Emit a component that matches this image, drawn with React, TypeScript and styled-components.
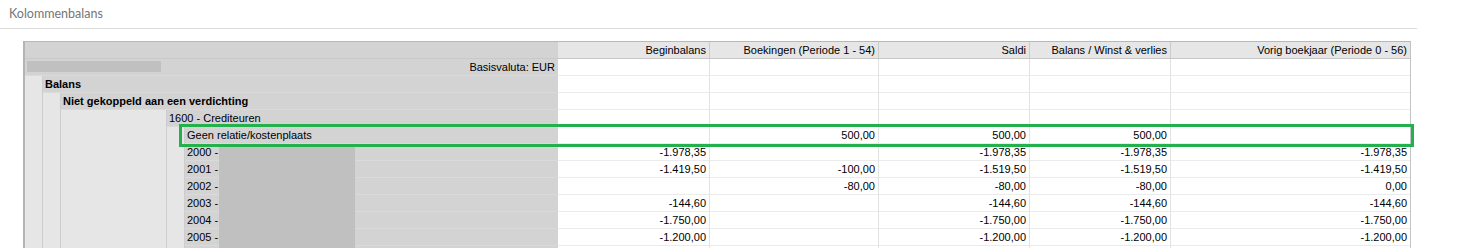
import styled, { createGlobalStyle } from "styled-components";

const GlobalStyle = createGlobalStyle`
    body {
        margin: 0;
        background: #ffffff;
        font-family: "Liberation Sans", Arial, sans-serif;
    }
`

const TitleBar = styled.div`
    width: 1408px;
    height: 28px;
    padding-left: 9px;
    border-bottom: 1px solid #dcdcdc;
    font-family: Lato, "Open Sans", sans-serif;
    font-size: 12.5px;
    line-height: 27px;
    color: #767676;
`

const TableWrap = styled.div`
    position: relative;
    width: 1385px;
    margin: 12px 0 0 23px;
    border-top: 1px solid #b8b8b8;
    border-left: 2px solid #b4b4b4;
    border-right: 1px solid #c4c4c4;
    font-size: 11px;
    line-height: 16px;
    color: #000000;
`

const Row = styled.div`
    display: grid;
    grid-template-columns: 533px 152px 169px 151px 141px 239px;
    height: 17px;
`

const LabelCell = styled.div`
    display: flex;
    height: 17px;
    background: #d3d3d3;
`

const Indent = styled.div<{ $w: number }>`
    flex: none;
    width: ${p => p.$w}px;
    height: 17px;
    box-sizing: border-box;
    background: #e6e6e6;
    border-right: 1px solid #cdcdcd;
`

const LabelBody = styled.div<{ $bold?: boolean; $right?: boolean }>`
    flex: 1;
    display: flex;
    justify-content: ${p => (p.$right ? "space-between" : "flex-start")};
    height: 16px;
    padding: 0 3px 0 2px;
    border-bottom: 1px solid #dadada;
    font-weight: ${p => (p.$bold ? 700 : 400)};
    white-space: nowrap;
`

const Code = styled.span`
    flex: none;
    width: 32px;
`

const Redacted = styled.span<{ $w: number; $inset?: boolean }>`
    flex: none;
    width: ${p => p.$w}px;
    height: ${p => (p.$inset ? "11px" : "17px")};
    margin-top: ${p => (p.$inset ? "2px" : "0")};
    background: #c0c0c0;
`

const HeadCell = styled.div`
    height: 16px;
    padding-right: 3px;
    background: #e6e6e6;
    border-right: 1px solid #cbcbcb;
    border-bottom: 1px solid #c6c6c6;
    text-align: right;
    white-space: nowrap;
    &:last-child {
        border-right: none;
    }
`

const HeadLabel = styled.div`
    height: 16px;
    background: #d3d3d3;
    border-bottom: 1px solid #c9c9c9;
`

const NumCell = styled.div`
    height: 16px;
    padding-right: 3px;
    background: #ffffff;
    border-right: 1px solid #e2e2e2;
    border-bottom: 1px solid #ebebeb;
    text-align: right;
    white-space: nowrap;
    &:last-child {
        border-right: none;
    }
`

const Highlight = styled.div`
    position: absolute;
    left: 154px;
    top: 82px;
    width: 1235px;
    height: 23px;
    box-sizing: border-box;
    border: 3px solid #22b14c;
    pointer-events: none;
`

type Values = [string, string, string, string, string]

const columns = [
    "Beginbalans",
    "Boekingen (Periode 1 - 54)",
    "Saldi",
    "Balans / Winst & verlies",
    "Vorig boekjaar (Periode 0 - 56)",
]

const empty: Values = ["", "", "", "", ""]

// the last row only peeks in at the bottom edge, so it stays blank
const accounts: { code: string; values: Values }[] = [
    { code: "2000 -", values: ["-1.978,35", "", "-1.978,35", "-1.978,35", "-1.978,35"] },
    { code: "2001 -", values: ["-1.419,50", "-100,00", "-1.519,50", "-1.519,50", "-1.419,50"] },
    { code: "2002 -", values: ["", "-80,00", "-80,00", "-80,00", "0,00"] },
    { code: "2003 -", values: ["-144,60", "", "-144,60", "-144,60", "-144,60"] },
    { code: "2004 -", values: ["-1.750,00", "", "-1.750,00", "-1.750,00", "-1.750,00"] },
    { code: "2005 -", values: ["-1.200,00", "", "-1.200,00", "-1.200,00", "-1.200,00"] },
    { code: "", values: empty },
]

function Numbers({ values }: { values: Values }) {
    return (
        <>
            {values.map((v, i) => (
                <NumCell key={i}>{v}</NumCell>
            ))}
        </>
    )
}

function Indents({ widths }: { widths: number[] }) {
    return (
        <>
            {widths.map((w, i) => (
                <Indent key={i} $w={w} />
            ))}
        </>
    )
}

function App() {
    const deep = [18, 18, 106, 18]

    return (
        <>
            <GlobalStyle />
            <TitleBar>Kolommenbalans</TitleBar>

            <TableWrap>
                <Row>
                    <HeadLabel />
                    {columns.map(c => (
                        <HeadCell key={c}>{c}</HeadCell>
                    ))}
                </Row>

                <Row>
                    <LabelCell>
                        <LabelBody $right>
                            <Redacted $w={134} $inset />
                            <span>Basisvaluta: EUR</span>
                        </LabelBody>
                    </LabelCell>
                    <Numbers values={empty} />
                </Row>

                <Row>
                    <LabelCell>
                        <Indents widths={[18]} />
                        <LabelBody $bold>Balans</LabelBody>
                    </LabelCell>
                    <Numbers values={empty} />
                </Row>

                <Row>
                    <LabelCell>
                        <Indents widths={[18, 18]} />
                        <LabelBody $bold>Niet gekoppeld aan een verdichting</LabelBody>
                    </LabelCell>
                    <Numbers values={empty} />
                </Row>

                <Row>
                    <LabelCell>
                        <Indents widths={[18, 18, 106]} />
                        <LabelBody>1600 - Crediteuren</LabelBody>
                    </LabelCell>
                    <Numbers values={empty} />
                </Row>

                <Row>
                    <LabelCell>
                        <Indents widths={deep} />
                        <LabelBody>Geen relatie/kostenplaats</LabelBody>
                    </LabelCell>
                    <Numbers values={["", "500,00", "500,00", "500,00", ""]} />
                </Row>

                {accounts.map((a, i) => (
                    <Row key={i}>
                        <LabelCell>
                            <Indents widths={deep} />
                            <LabelBody>
                                <Code>{a.code}</Code>
                                <Redacted $w={136} />
                            </LabelBody>
                        </LabelCell>
                        <Numbers values={a.values} />
                    </Row>
                ))}

                <Highlight />
            </TableWrap>
        </>
    )
}

export default App
